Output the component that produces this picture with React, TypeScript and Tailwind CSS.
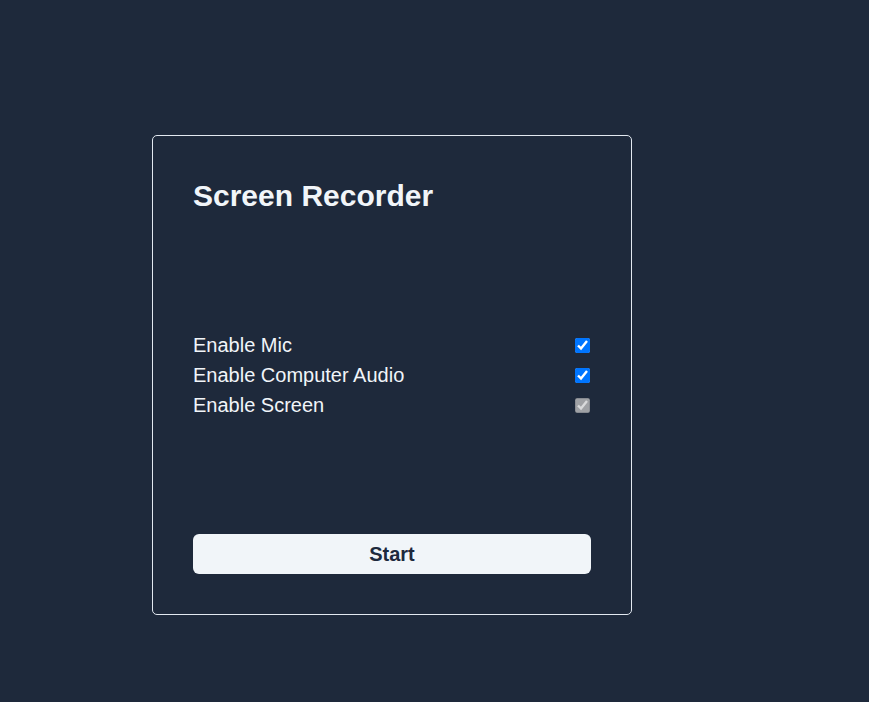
import { useState } from 'react';

const options = [
  { key: 'mic', label: 'Enable Mic', disabled: false },
  { key: 'audio', label: 'Enable Computer Audio', disabled: false },
  { key: 'screen', label: 'Enable Screen', disabled: true },
];

export default function App() {
  const [checked, setChecked] = useState<Record<string, boolean>>({
    mic: true,
    audio: true,
    screen: true,
  });

  return (
    <div className="min-h-screen bg-[#1e293b] pl-[152px] pt-[135px] font-['Liberation_Sans',Arial,sans-serif] text-slate-100">
      <div className="w-[480px] h-[480px] rounded-[5px] border border-slate-200 p-10 flex flex-col">
        <h1 className="text-3xl leading-10 font-bold">Screen Recorder</h1>

        {/* Options */}
        <div className="mt-[114px] flex flex-col">
          {options.map((opt) => (
            <label key={opt.key} className="flex items-center justify-between text-xl leading-[30px]">
              <span>{opt.label}</span>
              <input
                type="checkbox"
                className="mr-px w-[15px] h-[15px]"
                checked={checked[opt.key]}
                disabled={opt.disabled}
                onChange={(e) => setChecked((prev) => ({ ...prev, [opt.key]: e.target.checked }))}
              />
            </label>
          ))}
        </div>

        <button className="mt-auto h-10 w-full rounded-md bg-slate-100 text-xl font-bold text-slate-800">
          Start
        </button>
      </div>
    </div>
  );
}
